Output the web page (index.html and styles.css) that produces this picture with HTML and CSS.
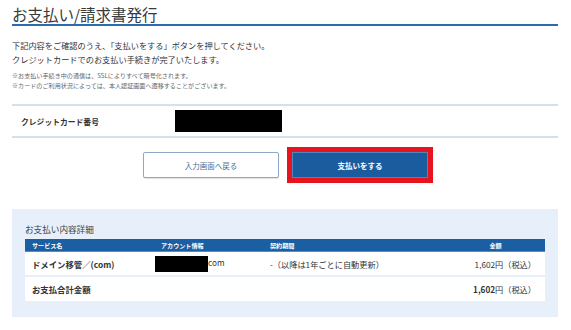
FILE: index.html
```html
<!DOCTYPE html>
<html lang="ja">
<head>
    <meta charset="UTF-8">
    <meta name="viewport" content="width=device-width, initial-scale=1.0">
    <title>お支払い/請求書発行</title>
    <link rel="stylesheet" href="styles.css">
</head>
<body>
    <div class="page">
        <h1 class="title">お支払い/請求書発行</h1>

        <p class="lead">下記内容をご確認のうえ、「支払いをする」ボタンを押してください。<br>クレジットカードでのお支払い手続きが完了いたします。</p>
        <p class="notes">※お支払い手続き中の通信は、SSLによりすべて暗号化されます。<br>※カードのご利用状況によっては、本人認証画面へ遷移することがございます。</p>

        <div class="card-row">
            <div class="card-label">クレジットカード番号</div>
            <div class="card-value"><span class="redact redact-card"></span></div>
        </div>

        <div class="actions">
            <button class="btn btn-back">入力画面へ戻る</button>
            <div class="highlight">
                <button class="btn btn-pay">支払いをする</button>
            </div>
        </div>

        <div class="detail">
            <h2 class="detail-title">お支払い内容詳細</h2>
            <table class="detail-table">
                <colgroup>
                    <col class="col-service">
                    <col class="col-account">
                    <col class="col-period">
                    <col class="col-amount">
                </colgroup>
                <thead>
                    <tr>
                        <th>サービス名</th>
                        <th>アカウント情報</th>
                        <th>契約期間</th>
                        <th class="center">金額</th>
                    </tr>
                </thead>
                <tbody>
                    <tr>
                        <td class="strong">ドメイン移管／(com)</td>
                        <td><span class="redact redact-domain"></span>com</td>
                        <td>-（以降は1年ごとに自動更新）</td>
                        <td class="right">1,602円（税込）</td>
                    </tr>
                    <tr class="total">
                        <td class="strong">お支払合計金額</td>
                        <td></td>
                        <td></td>
                        <td class="right"><b>1,602</b>円（税込）</td>
                    </tr>
                </tbody>
            </table>
        </div>
    </div>
</body>
</html>
```

FILE: styles.css
```css
body {
    margin: 0;
    padding: 0;
    font-family: "Noto Sans CJK JP", "Noto Sans", sans-serif;
    color: #333;
    background: #fff;
}

.page {
    padding: 0 12px;
    width: 546px;
}

.title {
    margin: 0;
    padding-top: 4px;
    font-size: 15.5px;
    line-height: 20px;
    font-weight: normal;
    color: #3a3a3a;
    border-bottom: 2px solid #2a6db2;
}

.lead {
    margin: 12px 0 0;
    font-size: 8.2px;
    line-height: 14px;
}

.notes {
    margin: 5px 0 0;
    font-size: 6.1px;
    line-height: 10px;
    color: #666;
}

.card-row {
    margin-top: 13px;
    display: grid;
    grid-template-columns: 154px 1fr;
    align-items: center;
    height: 30px;
    padding-left: 9px;
    border-top: 2px solid #d6dfea;
    border-bottom: 2px solid #d6dfea;
}

.card-label {
    font-size: 7.8px;
    font-weight: bold;
}

.card-value {
    display: flex;
    align-items: center;
}

.redact {
    display: inline-block;
    background: #000;
    vertical-align: middle;
}

.redact-card {
    width: 107px;
    height: 22px;
}

.redact-domain {
    width: 53px;
    height: 16px;
    margin-left: -6px;
}

.actions {
    margin-top: 9px;
    padding-left: 6px;
    display: flex;
    justify-content: center;
    align-items: center;
    gap: 8px;
}

.btn {
    font-family: inherit;
    font-size: 7.5px;
    width: 136px;
    height: 26px;
    padding: 0;
    cursor: pointer;
}

.btn-back {
    background: #fff;
    color: #4f6f96;
    border: 1px solid #8ea8c8;
    border-radius: 2px;
    box-shadow: 0 1px 1px rgba(0, 0, 0, 0.12);
}

.highlight {
    border: 5px solid #e6141f;
    padding: 0;
    display: flex;
}

.btn-pay {
    background: #1b5c9f;
    color: #fff;
    font-weight: bold;
    border: 1px solid #4f86c0;
}

.detail {
    margin-top: 26px;
    background: #e7f0fa;
    padding: 13px 13px 16px;
}

.detail-title {
    margin: 0 0 3px;
    font-size: 8.6px;
    line-height: 14px;
    font-weight: normal;
    color: #444;
}

.detail-table {
    width: 520px;
    border-collapse: collapse;
    table-layout: fixed;
    background: #fff;
    font-size: 8.2px;
}

.col-service { width: 130px; }
.col-account { width: 109px; }
.col-period { width: 181px; }
.col-amount { width: 100px; }

.detail-table th {
    background: #1b5ea1;
    color: #fff;
    font-size: 6.1px;
    font-weight: bold;
    text-align: left;
    height: 12px;
    padding: 0 6px 0 7px;
    border-bottom: 1px solid #5a8cc4;
}

.detail-table td {
    height: 23px;
    padding: 0 6px 0 7px;
    color: #333;
    white-space: nowrap;
}

.detail-table tbody tr:first-child td {
    border-bottom: 2px solid #e7f0fa;
}

.detail-table .total td {
    height: 24px;
}

.detail-table td:nth-child(2),
.detail-table th:nth-child(2),
.detail-table td:nth-child(3),
.detail-table th:nth-child(3) {
    padding-left: 6px;
}

.detail-table .strong {
    font-weight: bold;
    font-size: 8.4px;
}

.detail-table .center {
    text-align: center;
}

.detail-table .right {
    text-align: right;
    padding-right: 9px;
}
```
